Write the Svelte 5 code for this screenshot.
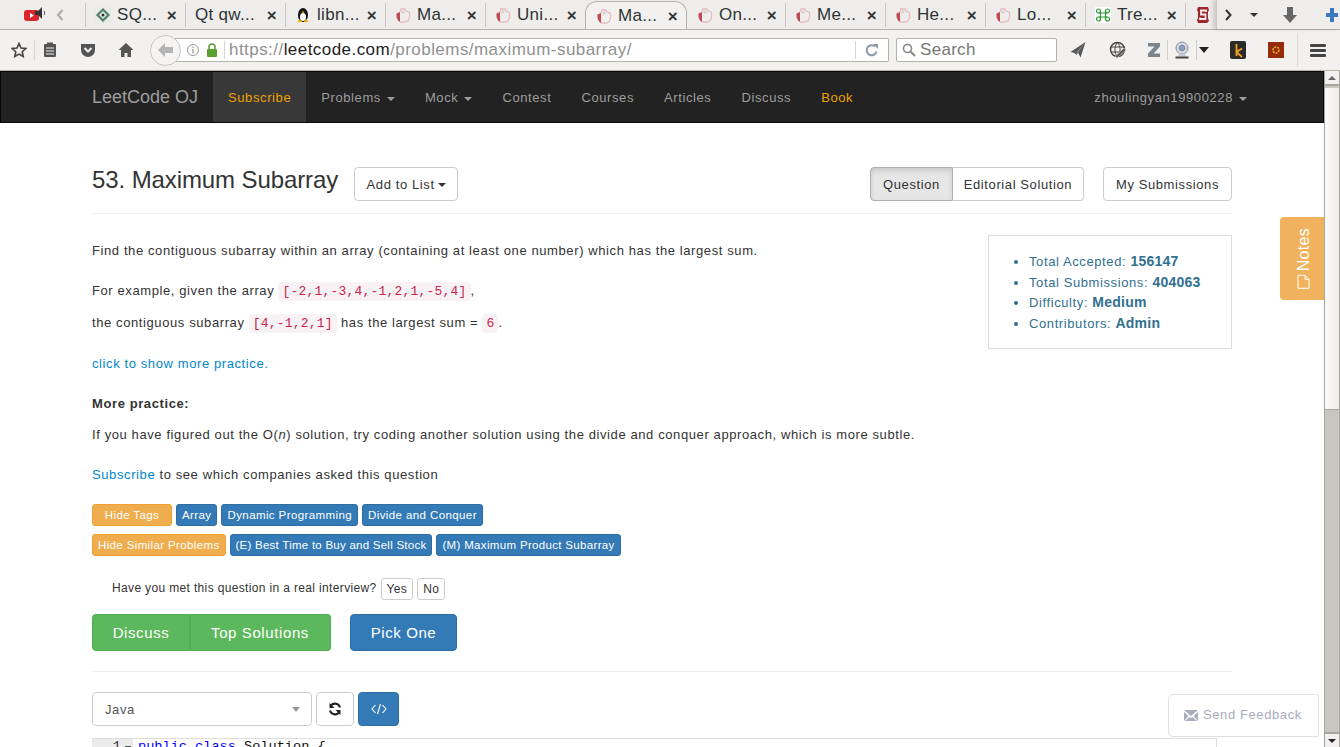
<script>
  const tabs = [
    { label: 'SQ...', icon: 'sq' },
    { label: 'Qt qw...', icon: 'none' },
    { label: 'libn...', icon: 'tux' },
    { label: 'Ma...', icon: 'lc' },
    { label: 'Uni...', icon: 'lc' },
    { label: 'Ma...', icon: 'lc', active: true },
    { label: 'On...', icon: 'lc' },
    { label: 'Me...', icon: 'lc' },
    { label: 'He...', icon: 'lc' },
    { label: 'Lo...', icon: 'lc' },
    { label: 'Tre...', icon: 'tree' }
  ];
  const navItems = [
    { label: 'Subscribe', cls: 'sub' },
    { label: 'Problems', caret: true },
    { label: 'Mock', caret: true },
    { label: 'Contest' },
    { label: 'Courses' },
    { label: 'Articles' },
    { label: 'Discuss' },
    { label: 'Book', cls: 'book' }
  ];
  const stats = [
    ['Total Accepted:', '156147'],
    ['Total Submissions:', '404063'],
    ['Difficulty:', 'Medium'],
    ['Contributors:', 'Admin']
  ];
</script>

<div class="window">
  <div class="tabbar">
    <div class="audio">
      <svg width="24" height="16" viewBox="0 0 24 16">
        <rect x="0" y="4" width="15" height="11" rx="3" fill="#d8262c" />
        <path d="M6 7l4 2.500L6 12z" fill="#fff" />
        <path d="M11 5h3l4-4v12l-4-4h-3z" fill="#333" />
        <path d="M20 5q1.500 2 0 4" fill="none" stroke="#555" />
      </svg>
    </div>
    <svg class="back-arrow" width="10" height="14" viewBox="0 0 10 14"><path d="M7.500 2L3 7l4.500 5" fill="none" stroke="#aaa" stroke-width="2" /></svg>
    <div class="tabs">
      {#each tabs as t}
        <div class="tab" class:active={t.active}>
          {#if t.icon === 'sq'}
            <svg class="fav" width="16" height="16" viewBox="0 0 16 16"><rect width="16" height="16" fill="#e8ece8" /><path d="M8 1l7 7-7 7-7-7z" fill="#4f7f68" /><path d="M8 4l4 4-4 4-4-4z" fill="#dfe8e2" /><circle cx="8" cy="8" r="1.500" fill="#333" /></svg>
          {:else if t.icon === 'tux'}
            <svg class="fav" width="16" height="16" viewBox="0 0 16 16"><ellipse cx="8" cy="8" rx="5" ry="7" fill="#111" /><ellipse cx="8" cy="10" rx="3" ry="4" fill="#fff" /><path d="M6.500 4.500h3L8 6.500z" fill="#f0b000" /><path d="M2 15l3-3 2 3zM14 15l-3-3-2 3z" fill="#f0b000" /></svg>
          {:else if t.icon === 'lc'}
            <svg class="fav" width="16" height="16" viewBox="0 0 16 16"><path d="M1.500 6.500L5 5v10C2.500 14 1 10 1.500 6.500z" fill="#c24a52" /><path d="M5 5l1-3h4l1 2 3 1c1 3 .5 7-1.500 9.500L9 15H5" fill="none" stroke="#e6bcbf" stroke-width="1.300" /><path d="M6.500 3.500h3v3h-3z" fill="#d9d0d0" /></svg>
          {:else if t.icon === 'tree'}
            <svg class="fav" width="16" height="16" viewBox="0 0 16 16"><rect width="16" height="16" fill="#fff" /><path d="M5.500 4v8M10.500 4v8M3.500 6h9M3.500 10h9" fill="none" stroke="#2f9a3a" stroke-width="1.200" /><circle cx="3.500" cy="4" r="2" fill="none" stroke="#2f9a3a" stroke-width="1.200" /><circle cx="12.500" cy="4" r="2" fill="none" stroke="#2f9a3a" stroke-width="1.200" /><circle cx="3.500" cy="12" r="2" fill="none" stroke="#2f9a3a" stroke-width="1.200" /><circle cx="12.500" cy="12" r="2" fill="none" stroke="#2f9a3a" stroke-width="1.200" /></svg>
          {/if}
          <span class="tab-label">{t.label}</span>
          <span class="tab-x">×</span>
        </div>
      {/each}
      <div class="tab cut">
        <svg width="16" height="18" viewBox="0 0 16 18"><path d="M3 1h10l1 3-1 2v6l1 3-2 2H3l-1-3 1-2V6L2 4z" fill="#a0262c" /><path d="M11 6V4.500H6v4h4.500v4.500H5v-1.500" fill="none" stroke="#eee" stroke-width="1.800" /></svg>
      </div>
    </div>
    <div class="tab-tools">
      <svg width="10" height="14" viewBox="0 0 10 14"><path d="M3 2l4.500 5L3 12" fill="none" stroke="#333" stroke-width="2" /></svg>
      <span class="mini-caret"></span>
      <svg width="16" height="18" viewBox="0 0 16 18"><path d="M5 1h6v8h4l-7 8-7-8h4z" fill="#666" /></svg>
      <svg width="14" height="16" viewBox="0 0 14 16"><path d="M5 1h4v5h4v4H9v5H5v-5H1V6h4z" fill="#3c78c0" /></svg>
    </div>
  </div>

  <div class="toolbar">
    <svg class="t-star" width="16" height="16" viewBox="0 0 16 16"><path d="M8 1.500l2 4.500 4.800.5-3.600 3.200 1 4.800L8 12.100l-4.200 2.400 1-4.800L1.200 6.500 6 6z" fill="none" stroke="#444" stroke-width="1.600" /></svg>
    <span class="t-sep"></span>
    <svg class="t-clip" width="14" height="16" viewBox="0 0 14 16"><rect x="1" y="2" width="12" height="13" rx="1" fill="#555" /><rect x="4" y="0.500" width="6" height="3" fill="#555" /><path d="M3 6h8M3 9h8M3 12h8" stroke="#eee" /></svg>
    <svg class="t-pocket" width="16" height="16" viewBox="0 0 16 16"><path d="M1 2h14v6a7 7 0 0 1-14 0z" fill="#555" /><path d="M4.500 6L8 9.500 11.500 6" fill="none" stroke="#eee" stroke-width="2" /></svg>
    <svg class="t-home" width="16" height="16" viewBox="0 0 16 16"><path d="M8 1L0.500 8H3v7h3.500v-4h3v4H13V8h2.500z" fill="#555" /></svg>
    <div class="urlwrap">
      <div class="backbtn">
        <svg width="18" height="16" viewBox="0 0 18 16"><path d="M8 1L1 8l7 7v-4h8V5H8z" fill="#b4b4b4" /></svg>
      </div>
      <div class="urlbar">
        <svg class="info" width="14" height="14" viewBox="0 0 14 14"><circle cx="7" cy="7" r="5.500" fill="none" stroke="#999" /><path d="M7 6v4.500M7 3.500v1.500" stroke="#999" stroke-width="1.300" /></svg>
        <svg class="lock" width="12" height="14" viewBox="0 0 12 14"><rect x="1" y="6" width="10" height="8" rx="1" fill="#5aa02c" /><path d="M3 6V4a3 3 0 0 1 6 0v2" fill="none" stroke="#5aa02c" stroke-width="1.600" /></svg>
        <span class="url-sep"></span>
        <span class="url"><span class="dim">https://</span>leetcode.com<span class="dim">/problems/maximum-subarray/</span></span>
        <span class="url-end"></span>
        <svg class="reload" width="14" height="14" viewBox="0 0 14 14"><path d="M11.500 8.500A5 5 0 1 1 10 3.500" fill="none" stroke="#8a98a8" stroke-width="2" /><path d="M8 1h5v5z" fill="#8a98a8" /></svg>
      </div>
    </div>
    <div class="searchbar">
      <svg width="14" height="14" viewBox="0 0 14 14"><circle cx="5.500" cy="5.500" r="4" fill="none" stroke="#888" stroke-width="1.600" /><path d="M8.500 8.500l4.500 4.500" stroke="#888" stroke-width="2" /></svg>
      <span>Search</span>
    </div>
    <div class="extensions">
      <svg class="ext-send" width="16" height="18" viewBox="0 0 16 18"><path d="M15.500 1L0.500 11l4 1 2 2L8 11.500l2.500 5z" fill="#555" /><path d="M15 1.500L6.500 14v-3z" fill="#888" /></svg>
      <svg class="ext-globe" width="18" height="18" viewBox="0 0 18 18"><circle cx="8.500" cy="8.500" r="7" fill="none" stroke="#444" stroke-width="1.500" /><path d="M2 6h13M2 11h13M8.500 1.500c-3.500 4-3.500 10 0 14M8.500 1.500c3.500 4 3.500 10 0 14" fill="none" stroke="#444" /><path d="M6 15.500l9-8.500 2 2-9 8z" fill="#555" stroke="#f2f1ef" stroke-width="0.500" /></svg>
      <svg class="ext-z" width="14" height="16" viewBox="0 0 14 16"><path d="M1 1h12v3.500L6.500 11.500H13V15H1v-3.500l6.500-7H1z" fill="#7d858c" /></svg>
      <span class="ext-sep a"></span>
      <svg class="ext-cam" width="16" height="18" viewBox="0 0 16 18"><circle cx="8" cy="7" r="6" fill="#d8dae2" stroke="#8a8e9a" /><circle cx="8" cy="7" r="2.800" fill="#8aa4cc" stroke="#667" stroke-width="0.700" /><path d="M5 12.500h6l1 3H4z" fill="#c8ccd4" /><path d="M1.500 15.500h13V17.500h-13z" fill="#444" /></svg>
      <span class="ext-sep b"></span>
      <span class="dd-caret"></span>
      <svg class="ext-k" width="16" height="18" viewBox="0 0 16 18"><rect width="16" height="18" rx="2" fill="#2a2a2a" /><path d="M6.500 3v12M12 7.500l-5.500 3.500 5.500 5" fill="none" stroke="#f0a020" stroke-width="1.800" /></svg>
      <svg class="ext-o" width="16" height="16" viewBox="0 0 16 16"><rect width="16" height="16" fill="#962c0a" /><circle cx="8" cy="8" r="3" fill="none" stroke="#e8b030" stroke-width="1.500" stroke-dasharray="2 1" /></svg>
      <span class="ext-vsep"></span>
      <div class="hamburger"><i></i><i></i><i></i></div>
    </div>
  </div>

  <div class="viewport">
    <div class="page">
      <nav class="navbar">
        <div class="nav-inner">
          <span class="brand">LeetCode OJ</span>
          {#each navItems as n}
            <span class="nav-item {n.cls || ''}">{n.label}{#if n.caret}<span class="caret"></span>{/if}</span>
          {/each}
          <span class="nav-user">zhoulingyan19900228<span class="caret"></span></span>
        </div>
      </nav>

      <main class="container">
        <header class="qhead">
          <h1>53. Maximum Subarray</h1>
          <button class="btn add">Add to List<span class="caret dark"></span></button>
          <div class="qhead-right">
            <div class="btn-group">
              <button class="btn on">Question</button>
              <button class="btn">Editorial Solution</button>
            </div>
            <button class="btn">My Submissions</button>
          </div>
        </header>

        <div class="qbody">
          <div class="desc">
            <p class="p1">Find the contiguous subarray within an array (containing at least one number) which has the largest sum.</p>
            <p class="p2">For example, given the array <code>[-2,1,-3,4,-1,2,1,-5,4]</code>,</p>
            <p class="p3">the contiguous subarray <code>[4,-1,2,1]</code> has the largest sum = <code>6</code>.</p>
            <p class="p4"><a href="#more">click to show more practice.</a></p>
            <p class="p5"><b>More practice:</b></p>
            <p class="p6">If you have figured out the O(<i>n</i>) solution, try coding another solution using the divide and conquer approach, which is more subtle.</p>
            <p class="p7"><a href="#sub">Subscribe</a> to see which companies asked this question</p>
          </div>
          <ul class="stats">
            {#each stats as s}
              <li>{s[0]} <b>{s[1]}</b></li>
            {/each}
          </ul>
        </div>

        <div class="tagrow">
          <span class="tag warn w1">Hide Tags</span>
          <span class="tag">Array</span>
          <span class="tag">Dynamic Programming</span>
          <span class="tag">Divide and Conquer</span>
        </div>
        <div class="tagrow second">
          <span class="tag warn">Hide Similar Problems</span>
          <span class="tag tight">(E) Best Time to Buy and Sell Stock</span>
          <span class="tag tight2">(M) Maximum Product Subarray</span>
        </div>

        <div class="interview">
          <span class="ask">Have you met this question in a real interview?</span>
          <button class="btn xs">Yes</button>
          <button class="btn xs">No</button>
        </div>

        <div class="actions">
          <div class="green-group">
            <button class="big green discuss">Discuss</button>
            <button class="big green top">Top Solutions</button>
          </div>
          <button class="big blue">Pick One</button>
        </div>

        <hr />

        <div class="editor-tools">
          <div class="lang">Java<span class="lang-caret"></span></div>
          <button class="btn icon">
            <svg width="14" height="14" viewBox="0 0 14 14"><path d="M12 5.500A5.200 5.200 0 0 0 3 3.500M2 8.500A5.200 5.200 0 0 0 11 10.500" fill="none" stroke="#222" stroke-width="2" /><path d="M1.500 1v5h5zM12.500 13V8h-5z" fill="#222" /></svg>
          </button>
          <button class="btn icon code">
            <svg width="16" height="12" viewBox="0 0 16 12"><path d="M4.500 2L1 6l3.500 4M11.500 2L15 6l-3.500 4M9.500 1L6.500 11" fill="none" stroke="#fff" stroke-width="1.100" /></svg>
          </button>
        </div>

        <div class="code-editor">
          <div class="gutter">1<span class="fold"></span></div>
          <div class="line"><span class="kw">public class</span> Solution {'{'}</div>
        </div>
      </main>

      <div class="notes">
        <span class="notes-in">
          <svg width="13" height="15" viewBox="0 0 13 15"><path d="M1 1h7l4 4v9H1z M8 1v4h4" fill="none" stroke="#fff" /></svg>
          Notes
        </span>
      </div>
      <div class="feedback">
        <svg width="14" height="11" viewBox="0 0 14 11"><path d="M0 0h14L7 6z M0 2v9l4.500-5z M14 2v9L9.500 6z M1 11h12L8.500 7 7 8 5.500 7z" fill="#a8acbc" /></svg>
        <span class="fb-text">Send Feedback</span>
      </div>
    </div>

    <div class="scrollbar">
      <div class="sb-btn"><span class="up"></span></div>
      <div class="sb-track"><div class="sb-thumb"></div></div>
      <div class="sb-btn"><span class="down"></span></div>
    </div>
  </div>
</div>

<style>
  :global(body) {
    margin: 0;
    overflow: hidden;
    font-family: "Liberation Sans", Arial, sans-serif;
  }

  .window {
    width: 1340px;
    height: 747px;
    display: flex;
    flex-direction: column;
    overflow: hidden;
    background: #f2f1ef;
  }

  /* browser tabs */
  .tabbar {
    height: 29px;
    flex: none;
    display: flex;
    align-items: center;
    background: #eeedeb;
    border-bottom: 1px solid #b5b2aa;
    position: relative;
  }

  .audio {
    margin-left: 24px;
    width: 28px;
    height: 16px;
    margin-top: -2px;
  }

  .back-arrow {
    margin-left: 3px;
    margin-right: 20px;
  }

  .tabs {
    display: flex;
    height: 29px;
    width: 1130px;
    overflow: hidden;
    flex: none;
  }

  .tab {
    width: 100px;
    flex: none;
    box-sizing: border-box;
    display: flex;
    align-items: center;
    padding: 0 8px 0 9px;
    border-left: 1px solid #c9c7c1;
    margin: 3px 0 2px;
    font-size: 17px;
    letter-spacing: 0.3px;
    color: #2e3436;
  }

  .tab.active {
    background: #f2f1ef;
    border: 1px solid #b5b2aa;
    border-bottom: none;
    border-radius: 12px 12px 0 0;
    margin: 1px 0 -1px;
    width: 102px;
    padding-left: 10px;
    z-index: 1;
  }

  .tab.active + .tab {
    border-left-color: transparent;
    width: 98px;
  }

  .tab.cut {
    width: 30px;
    padding: 0 0 0 9px;
  }

  .fav {
    flex: none;
    margin-right: 6px;
  }

  .tab-label {
    flex: 1;
    white-space: nowrap;
    overflow: hidden;
  }

  .tab-x {
    font-size: 17px;
    font-weight: bold;
    color: #333;
    line-height: 1;
  }

  .tab-tools {
    display: flex;
    align-items: center;
    position: absolute;
    left: 1216px;
    top: 0;
    height: 29px;
    border-left: 1px solid #c9c7c1;
    padding-left: 6px;
    background: #eeedeb;
    width: 124px;
    box-sizing: border-box;
    box-shadow: -3px 0 4px rgba(0, 0, 0, 0.15);
  }

  .mini-caret {
    width: 0;
    height: 0;
    border: 4px solid transparent;
    border-top-color: #333;
    border-bottom: none;
    margin: 0 24px 0 17px;
  }

  .tab-tools svg:last-child {
    margin-left: 27px;
  }

  /* address toolbar */
  .toolbar {
    height: 41px;
    flex: none;
    box-sizing: border-box;
    display: flex;
    align-items: center;
    padding-left: 11px;
    background: #f2f1ef;
    border-bottom: 1px solid #b5b2aa;
  }

  .t-sep {
    width: 1px;
    height: 20px;
    background: #d5d3cd;
    margin: 0 7px 0 7px;
  }

  .t-clip {
    margin-left: 1px;
  }

  .t-pocket {
    margin-left: 23px;
  }

  .t-home {
    margin-left: 22px;
  }

  .urlwrap {
    margin-left: 16px;
    display: flex;
    align-items: center;
    width: 739px;
    flex: none;
    position: relative;
  }

  .backbtn {
    width: 31px;
    height: 31px;
    box-sizing: border-box;
    border: 1px solid #c8c6c0;
    border-radius: 50%;
    background: #f5f4f2;
    display: grid;
    place-items: center;
    z-index: 1;
    flex: none;
  }

  .urlbar {
    flex: 1;
    height: 24px;
    margin-left: -6px;
    box-sizing: border-box;
    border: 1px solid #b5b2aa;
    border-left: none;
    border-radius: 0 2px 2px 0;
    background: #fff;
    display: flex;
    align-items: center;
    padding-left: 11px;
  }

  .lock {
    margin-left: 6px;
  }

  .url-sep {
    width: 1px;
    height: 18px;
    background: #d8d6d0;
    margin: 0 4px 0 6px;
  }

  .url {
    font-size: 17px;
    letter-spacing: 0.45px;
    color: #222;
    flex: 1;
    white-space: nowrap;
  }

  .dim {
    color: #909090;
  }

  .url-end {
    width: 1px;
    height: 18px;
    background: #d8d6d0;
    margin-right: 9px;
  }

  .reload {
    margin-right: 9px;
  }

  .searchbar {
    margin-left: 7px;
    width: 161px;
    height: 24px;
    box-sizing: border-box;
    border: 1px solid #b5b2aa;
    border-radius: 2px;
    background: #fff;
    display: flex;
    align-items: center;
    padding-left: 5px;
    gap: 4px;
    font-size: 17px;
    letter-spacing: 0.3px;
    color: #777;
    flex: none;
  }

  .extensions {
    display: flex;
    align-items: center;
    margin-left: 13px;
  }

  .extensions svg {
    flex: none;
  }

  .ext-globe {
    margin-left: 23px;
  }

  .ext-z {
    margin-left: 20px;
  }

  .ext-sep {
    width: 1px;
    height: 20px;
    background: #cfcdc7;
  }

  .ext-sep.a {
    margin: 0 6px 0 6px;
  }

  .ext-sep.b {
    margin: 0 2px 0 6px;
  }

  .dd-caret {
    width: 0;
    height: 0;
    border: 5px solid transparent;
    border-top: 6px solid #222;
    border-bottom: none;
  }

  .ext-k {
    margin-left: 21px;
  }

  .ext-o {
    margin-left: 22px;
  }

  .ext-vsep {
    width: 1px;
    height: 34px;
    background: #dddbd5;
    margin: 0 12px 0 13px;
  }

  .hamburger {
    width: 16px;
    display: flex;
    flex-direction: column;
    gap: 2px;
  }

  .hamburger i {
    display: block;
    height: 3px;
    border-radius: 1px;
    background: #444;
  }

  /* page */
  .viewport {
    flex: 1;
    min-height: 0;
    display: flex;
    background: #fff;
  }

  .page {
    flex: 1;
    min-width: 0;
    position: relative;
    overflow: hidden;
    color: #333;
    font-size: 13px;
    letter-spacing: 0.6px;
  }

  .navbar {
    height: 52px;
    box-sizing: border-box;
    background: #222;
    border: 1px solid #080808;
  }

  .nav-inner {
    margin-left: 91px;
    width: 1140px;
    height: 50px;
    display: flex;
    align-items: stretch;
    line-height: 51px;
    color: #9d9d9d;
  }

  .brand {
    font-size: 18px;
    letter-spacing: 0;
    width: 121px;
    flex: none;
  }

  .nav-item {
    padding: 0 15px;
    white-space: nowrap;
  }

  .nav-item.sub {
    color: #f0a000;
    background: #383838;
  }

  .nav-item.book {
    color: #f0a000;
  }

  .nav-user {
    margin-left: auto;
    margin-right: -15px;
    white-space: nowrap;
  }

  .caret {
    display: inline-block;
    width: 0;
    height: 0;
    margin-left: 6px;
    vertical-align: middle;
    border-top: 4px solid #9d9d9d;
    border-left: 4px solid transparent;
    border-right: 4px solid transparent;
  }

  .caret.dark {
    border-top-color: #333;
    margin-left: 3px;
  }

  .container {
    width: 1140px;
    margin: 0 0 0 92px;
  }

  .qhead {
    display: flex;
    align-items: center;
    height: 91px;
    box-sizing: border-box;
    padding-top: 44px;
    padding-bottom: 12px;
    border-bottom: 1px solid #eee;
  }

  h1 {
    margin: 0 16px 0 0;
    font-size: 24px;
    letter-spacing: -0.1px;
    font-weight: 400;
    line-height: 26px;
    position: relative;
    top: -4px;
    white-space: nowrap;
  }

  .btn {
    font: inherit;
    letter-spacing: 0.6px;
    color: #333;
    background: #fff;
    border: 1px solid #ccc;
    border-radius: 4px;
    padding: 0 12px;
    height: 34px;
    cursor: pointer;
  }

  .qhead-right {
    margin-left: auto;
    display: flex;
    gap: 19px;
  }

  .btn-group {
    display: flex;
  }

  .btn-group .btn:first-child {
    border-radius: 4px 0 0 4px;
    width: 83px;
    padding: 0;
  }

  .btn-group .btn:last-child {
    border-radius: 0 4px 4px 0;
    border-left: none;
    width: 131px;
    padding: 0;
  }

  .btn.on {
    background: #e6e6e6;
    border-color: #adadad;
    box-shadow: inset 0 3px 5px rgba(0, 0, 0, 0.125);
  }

  .btn.add {
    width: 104px;
    padding: 0;
  }

  .qbody {
    display: flex;
    justify-content: space-between;
    height: 275px;
  }

  .desc p {
    margin: 0;
    line-height: 20px;
    white-space: nowrap;
  }

  .p1 { padding-top: 27px; }
  .p2 { padding-top: 20px; }
  .p3 { padding-top: 11px; }
  .p4 { padding-top: 20px; }
  .p5 { padding-top: 20px; }
  .p6 { padding-top: 11px; }
  .p7 { padding-top: 20px; }

  code {
    font-family: "Liberation Mono", monospace;
    font-size: 13px;
    letter-spacing: 0.2px;
    color: #c7254e;
    background: #f9f2f4;
    border-radius: 4px;
    padding: 2px 4px;
  }

  a {
    color: #0088cc;
    text-decoration: none;
  }

  .stats {
    margin: 21px 0 0;
    width: 244px;
    height: 114px;
    box-sizing: border-box;
    border: 1px solid #ddd;
    padding: 16px 0 0 40px;
    list-style: disc;
    color: #31708f;
    line-height: 20.500px;
  }

  .stats li {
    height: 20.500px;
  }

  .stats b {
    font-size: 14px;
    letter-spacing: 0.25px;
    line-height: 1;
  }

  .tagrow {
    display: flex;
    gap: 4px;
    height: 22px;
    margin-top: 15px;
  }

  .tagrow.second {
    margin-top: 8px;
  }

  .tag {
    background: #337ab7;
    color: #fff;
    border: 1px solid #2e6da4;
    border-radius: 3px;
    font-size: 11.500px;
    letter-spacing: 0.4px;
    line-height: 20px;
    padding: 0 5px;
    white-space: nowrap;
  }

  .tag.tight {
    letter-spacing: 0.25px;
  }

  .tag.tight2 {
    letter-spacing: 0.33px;
  }

  .tag.warn {
    background: #f0ad4e;
    border-color: #eea236;
    letter-spacing: 0.37px;
  }

  .tag.w1 {
    width: 78px;
    padding: 0;
    text-align: center;
  }

  .interview {
    margin-top: 22px;
    padding-left: 20px;
    display: flex;
    align-items: center;
    gap: 4px;
    font-size: 12px;
    letter-spacing: 0.35px;
    height: 22px;
  }

  .ask {
    padding-bottom: 2px;
  }

  .btn.xs {
    height: 22px;
    padding: 0 5px;
    font-size: 12px;
    border-radius: 3px;
    letter-spacing: 0.35px;
  }

  .actions {
    display: flex;
    margin-top: 14px;
    gap: 19px;
  }

  .green-group {
    display: flex;
  }

  .big {
    font: inherit;
    font-size: 15px;
    letter-spacing: 0.6px;
    height: 37px;
    padding: 0;
    border-radius: 4px;
    color: #fff;
    border: 1px solid;
    width: 107px;
  }

  .big.green {
    background: #5cb85c;
    border-color: #4cae4c;
  }

  .big.discuss {
    width: 98px;
    border-radius: 4px 0 0 4px;
  }

  .big.top {
    width: 141px;
    border-radius: 0 4px 4px 0;
    border-left: none;
    box-shadow: inset 1px 0 0 #4fae4f;
  }

  .big.blue {
    background: #337ab7;
    border-color: #2e6da4;
  }

  hr {
    margin: 20px 0;
    border: none;
    border-top: 1px solid #eee;
  }

  .editor-tools {
    display: flex;
    gap: 4px;
    height: 34px;
  }

  .lang {
    width: 220px;
    box-sizing: border-box;
    border: 1px solid #ccc;
    border-radius: 4px;
    line-height: 33px;
    padding-left: 12px;
    color: #555;
    position: relative;
  }

  .lang-caret {
    position: absolute;
    right: 11px;
    top: 14px;
    border-top: 5px solid #999;
    border-left: 4px solid transparent;
    border-right: 4px solid transparent;
  }

  .btn.icon {
    width: 38px;
    padding: 0;
    display: grid;
    place-items: center;
  }

  .btn.icon.code {
    width: 41px;
    background: #337ab7;
    border-color: #2e6da4;
  }

  .code-editor {
    margin-top: 12px;
    width: 1124px;
    border: 1px solid #ddd;
    border-left: none;
    display: flex;
    font-family: "Liberation Mono", monospace;
    font-size: 13.600px;
    letter-spacing: 0;
    line-height: 16px;
    height: 30px;
  }

  .gutter {
    width: 41px;
    box-sizing: border-box;
    background: #ebebeb;
    text-align: right;
    padding-right: 12px;
    position: relative;
  }

  .fold {
    position: absolute;
    right: 2px;
    top: 7px;
    width: 6px;
    height: 2px;
    background: #555;
  }

  .line {
    padding-left: 5px;
    color: #111;
  }

  .kw {
    color: #0000ff;
  }

  .notes {
    position: absolute;
    left: 1280px;
    top: 146px;
    width: 44px;
    height: 83px;
    background: #f0b25d;
    border-radius: 4px 0 0 4px;
    display: flex;
    align-items: center;
    justify-content: center;
  }

  .notes-in {
    writing-mode: vertical-rl;
    transform: rotate(180deg);
    display: flex;
    align-items: center;
    gap: 3px;
    color: #fff;
    font-size: 16px;
    letter-spacing: 0.3px;
    margin-left: 3px;
  }

  .notes-in svg {
    transform: rotate(180deg);
  }

  .feedback {
    position: absolute;
    left: 1168px;
    top: 623px;
    width: 151px;
    height: 43px;
    box-sizing: border-box;
    background: #fff;
    border: 1px solid #e0e0e0;
    border-radius: 5px 0 0 5px;
    display: flex;
    align-items: center;
    gap: 5px;
    padding-left: 15px;
    color: #a8acbc;
    white-space: nowrap;
  }

  .fb-text {
    padding-bottom: 2px;
  }

  /* page scrollbar */
  .scrollbar {
    width: 16px;
    flex: none;
    display: flex;
    flex-direction: column;
    background: #c8c6c0;
    border-left: 1px solid #a8a59c;
    border-right: 1px solid #a8a59c;
    box-sizing: border-box;
  }

  .sb-btn {
    height: 15px;
    flex: none;
    background: #f2f1ef;
    border-bottom: 2px solid #a8a59c;
    box-sizing: border-box;
    display: grid;
    place-items: center;
  }

  .sb-btn:last-child {
    border-bottom: none;
    border-top: 2px solid #a8a59c;
  }

  .up {
    border-bottom: 4px solid #666;
    border-left: 4px solid transparent;
    border-right: 4px solid transparent;
  }

  .down {
    border-top: 4px solid #222;
    border-left: 4px solid transparent;
    border-right: 4px solid transparent;
  }

  .sb-track {
    flex: 1;
  }

  .sb-thumb {
    height: 322px;
    margin-top: 2px;
    background: linear-gradient(to right, #fbfbfa, #eeede9);
    border-bottom: 1px solid #a8a59c;
    box-sizing: border-box;
  }
</style>
